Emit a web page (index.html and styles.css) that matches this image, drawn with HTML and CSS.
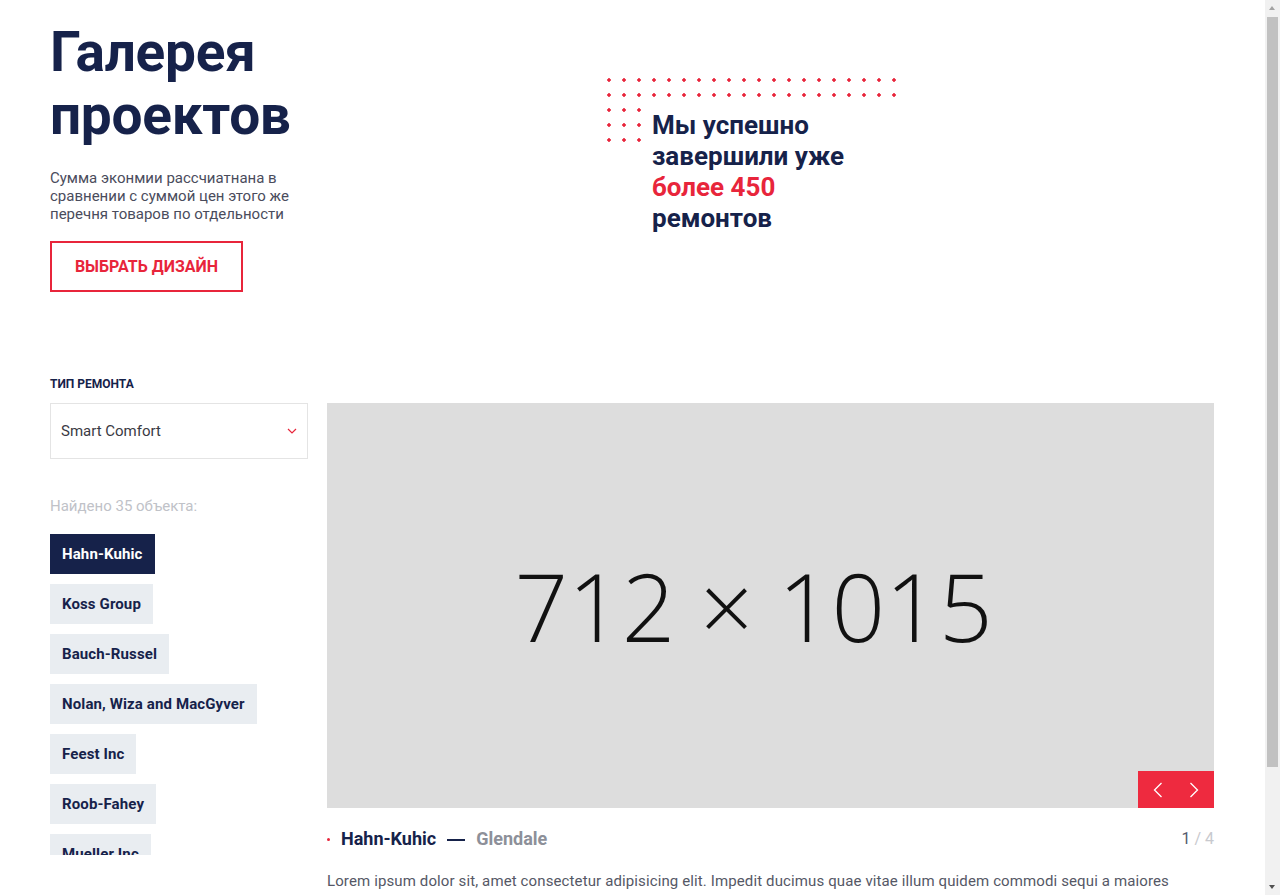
FILE: index.html
```html
<!DOCTYPE html>
<html lang="ru">
<head>
<meta charset="utf-8">
<title>Галерея проектов</title>
<link rel="stylesheet" href="styles.css">
</head>
<body>
<div class="page">
  <section class="hero">
    <div class="hero-intro">
      <h1 class="hero-title">Галерея проектов</h1>
      <p class="hero-text">Сумма эконмии рассчиатнана в сравнении с суммой цен этого же перечня товаров по отдельности</p>
      <a class="btn-outline" href="#">Выбрать дизайн</a>
    </div>
    <div class="stats">
      <p class="stats-text">Мы успешно<br>завершили уже<br><span class="accent">более 450</span><br>ремонтов</p>
    </div>
  </section>

  <section class="projects">
    <div class="filter-label">Тип ремонта</div>
    <div class="filters">
      <div class="select">
        <span class="select-value">Smart Comfort</span>
        <svg class="select-arrow" width="10" height="6" viewBox="0 0 10 6"><path d="M1 1l4 4 4-4" fill="none" stroke="#e8253b" stroke-width="1.2"/></svg>
      </div>
      <div class="found">Найдено 35 объекта:</div>
      <ul class="tags">
        <li class="tag tag-active">Hahn-Kuhic</li>
        <li class="tag">Koss Group</li>
        <li class="tag">Bauch-Russel</li>
        <li class="tag">Nolan, Wiza and MacGyver</li>
        <li class="tag">Feest Inc</li>
        <li class="tag">Roob-Fahey</li>
        <li class="tag">Mueller Inc</li>
        <li class="tag">Schmitt LLC</li>
      </ul>
    </div>
    <div class="gallery">
      <div class="slide">
        <span class="slide-placeholder">712 × 1015</span>
        <div class="slide-nav">
          <button class="nav-btn" aria-label="Назад"><svg width="12" height="16" viewBox="0 0 12 16"><path d="M10.5 1L3.5 8l7 7" fill="none" stroke="#fff" stroke-width="1.3"/></svg></button>
          <button class="nav-btn" aria-label="Вперёд"><svg width="12" height="16" viewBox="0 0 12 16"><path d="M1.5 1l7 7-7 7" fill="none" stroke="#fff" stroke-width="1.3"/></svg></button>
        </div>
      </div>
      <div class="caption">
        <div class="caption-title"><span class="caption-dot"></span><span class="caption-name">Hahn-Kuhic</span><span class="caption-dash"></span><span class="caption-city">Glendale</span></div>
        <div class="counter"><span class="counter-current">1</span> / 4</div>
      </div>
      <p class="slide-text">Lorem ipsum dolor sit, amet consectetur adipisicing elit. Impedit ducimus quae vitae illum quidem commodi sequi a maiores voluptatum, laboriosam nesciunt ipsam minus, eaque quod at aperiam.</p>
    </div>
  </section>
</div>
<div class="fake-scrollbar" aria-hidden="true">
  <span class="sb-arrow sb-up"></span>
  <span class="sb-thumb"></span>
  <span class="sb-arrow sb-down"></span>
</div>
</body>
</html>
```

FILE: styles.css
```css
* { box-sizing: border-box; }
html, body { margin: 0; padding: 0; }
body {
  font-family: Roboto, "Liberation Sans", Arial, sans-serif;
  color: #16224a;
  background: #fff;
  padding-right: 16px;
}
.page {
  width: 1164px;
  margin: 0 auto;
  padding: 21px 0 100px;
}
.hero {
  display: flex;
  align-items: flex-start;
}
.hero-intro {
  width: 258px;
  flex: none;
}
.hero-title {
  margin: 0;
  font-size: 55px;
  line-height: 63px;
  font-weight: 700;
  color: #16224a;
  letter-spacing: -0.3px;
}
.hero-text {
  margin: 22px 0 0;
  font-size: 15px;
  line-height: 18px;
  color: #4a4c5c;
}
.btn-outline {
  display: inline-block;
  margin-top: 18px;
  width: 193px;
  height: 51px;
  line-height: 47px;
  text-align: center;
  border: 2px solid #e8253b;
  color: #e8253b;
  font-size: 16px;
  font-weight: 700;
  text-transform: uppercase;
  text-decoration: none;
}
.stats {
  position: relative;
  width: 300px;
  margin-left: 299px;
  margin-top: 57px;
  padding: 26px 0 0 38px;
}
.stats::before {
  content: "";
  position: absolute;
  left: 0;
  top: 0;
  width: 300px;
  height: 75px;
  background-image: radial-gradient(circle at 2px 2px, #e8253b 1.5px, transparent 1.9px);
  background-size: 15px 15px;
}
.stats-text {
  position: relative;
  margin: 0;
  padding: 6px 0 0 7px;
  background: #fff;
  font-size: 26px;
  line-height: 31px;
  font-weight: 700;
  color: #16224a;
}
.accent { color: #e8253b; }

.projects {
  display: grid;
  grid-template-columns: 258px 887px;
  column-gap: 19px;
  row-gap: 12px;
  grid-template-areas:
    "label ."
    "filters gallery";
  margin-top: 85px;
}
.filter-label {
  grid-area: label;
  font-size: 12px;
  line-height: 13px;
  font-weight: 700;
  text-transform: uppercase;
  color: #16224a;
  margin-top: 1px;
}
.filters { grid-area: filters; }
.select {
  height: 56px;
  border: 1px solid #e4e4e4;
  display: flex;
  align-items: center;
  justify-content: space-between;
  padding: 0 10px;
}
.select-value {
  font-size: 15px;
  color: #3a3a44;
}
.found {
  margin-top: 38px;
  font-size: 15px;
  line-height: 18px;
  color: #c0c2c8;
}
.tags {
  list-style: none;
  margin: 19px 0 0;
  padding: 0;
  height: 321px;
  overflow: hidden;
  display: flex;
  flex-direction: column;
  align-items: flex-start;
  gap: 10px;
}
.tag {
  flex: none;
  height: 40px;
  line-height: 40px;
  padding: 0 12px;
  background: #e9edf1;
  color: #16224a;
  font-size: 15px;
  font-weight: 700;
  letter-spacing: 0.12px;
}
.tag-active {
  background: #16224a;
  color: #fff;
}

.gallery { grid-area: gallery; }
.slide {
  position: relative;
  height: 405px;
  background: #dddddd;
  display: flex;
  align-items: center;
  justify-content: center;
}
.slide-placeholder {
  font-family: "Open Sans", sans-serif;
  font-weight: 300;
  font-size: 94px;
  color: #111;
  margin-right: 34px;
  line-height: 1;
}
.slide-nav {
  position: absolute;
  right: 0;
  bottom: 0;
  width: 76px;
  height: 37px;
  background: #ee2a3f;
  display: flex;
}
.nav-btn {
  flex: 1;
  border: 0;
  background: transparent;
  padding: 0;
  display: flex;
  align-items: center;
  justify-content: center;
  cursor: pointer;
}
.caption {
  margin-top: 20px;
  display: flex;
  justify-content: space-between;
  align-items: center;
}
.caption-title {
  display: flex;
  align-items: center;
  font-size: 18px;
  line-height: 22px;
  font-weight: 700;
}
.caption-dot {
  width: 3px;
  height: 3px;
  border-radius: 50%;
  background: #e8253b;
  margin: 0 11px 0 0;
}
.caption-name { color: #16224a; }
.caption-dash {
  width: 18px;
  height: 2px;
  background: #16224a;
  margin: 1px 11px 0;
}
.caption-city { color: #8d9099; }
.counter {
  font-size: 16px;
  line-height: 22px;
  color: #c8c9ce;
}
.counter-current { color: #555a6e; }
.slide-text {
  margin: 19px 0 0;
  font-size: 15px;
  line-height: 24px;
  letter-spacing: 0.12px;
  color: #555866;
}

.fake-scrollbar {
  position: fixed;
  top: 0;
  right: 0;
  bottom: 0;
  width: 15px;
  background: #f1f1f1;
}
.sb-thumb {
  position: absolute;
  left: 2px;
  right: 2px;
  top: 17px;
  height: 750px;
  background: #c1c1c1;
}
.sb-arrow {
  position: absolute;
  left: 4px;
  width: 0;
  height: 0;
  border-left: 3.5px solid transparent;
  border-right: 3.5px solid transparent;
}
.sb-up {
  top: 6px;
  border-bottom: 4px solid #a3a3a3;
}
.sb-down {
  bottom: 6px;
  border-top: 4px solid #505050;
}
```
